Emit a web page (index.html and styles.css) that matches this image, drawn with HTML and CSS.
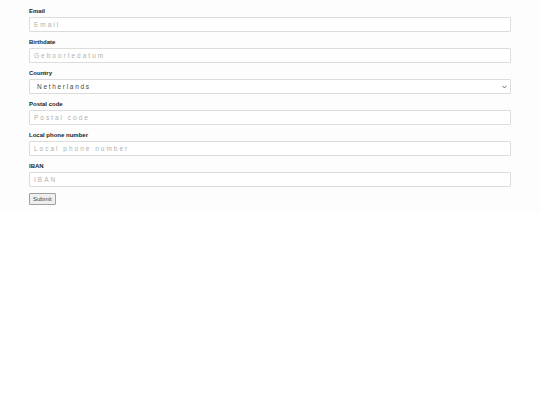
FILE: index.html
```html
<!DOCTYPE html>
<html lang="en">
<head>
  <meta charset="UTF-8">
  <title>Registration</title>
  <meta name="viewport" content="width=device-width, initial-scale=1.0">
  <link rel="stylesheet" href="styles.css">
</head>
<body>
  <form class="signup">
    <div class="field">
      <label for="email">Email</label>
      <input id="email" type="text" placeholder="Email">
    </div>
    <div class="field">
      <label for="birthdate">Birthdate</label>
      <input id="birthdate" type="text" placeholder="Geboortedatum">
    </div>
    <div class="field">
      <label for="country">Country</label>
      <select id="country">
        <option>Netherlands</option>
      </select>
    </div>
    <div class="field">
      <label for="postal">Postal code</label>
      <input id="postal" type="text" placeholder="Postal code">
    </div>
    <div class="field">
      <label for="phone">Local phone number</label>
      <input id="phone" type="text" placeholder="Local phone number">
    </div>
    <div class="field">
      <label for="iban">IBAN</label>
      <input id="iban" type="text" placeholder="IBAN">
    </div>
    <button type="submit" class="submit">Submit</button>
  </form>
</body>
</html>
```

FILE: styles.css
```css
html, body {
  margin: 0;
  background: #fff;
  font-family: 'Liberation Sans', Arial, sans-serif;
}
.signup {
  background: #fdfdfd;
  padding: 7px 29px 7px;
  display: flex;
  flex-direction: column;
  align-items: flex-start;
}
.field {
  width: 100%;
  display: flex;
  flex-direction: column;
  margin-bottom: 6px;
}
.field label {
  font-size: 6px;
  font-weight: 700;
  line-height: 8px;
  color: #222;
  margin-bottom: 2px;
}
.field input,
.field select {
  box-sizing: border-box;
  width: 100%;
  height: 15px;
  margin: 0;
  padding: 0 4px;
  border: 1px solid #dcdcdc;
  border-radius: 1px;
  background: #fff;
  font-family: 'Liberation Sans', Arial, sans-serif;
  font-size: 6.5px;
  letter-spacing: 2px;
  color: #444;
  outline: none;
}
.field input::placeholder {
  color: #b0b0b0;
}
/* kis nyíl a select jobb szélén */
.field select {
  -webkit-appearance: none;
  appearance: none;
  padding: 0 12px 0 7px;
  letter-spacing: 1.7px;
  color: #444;
  background: #fff url("data:image/svg+xml,%3Csvg xmlns='http://www.w3.org/2000/svg' width='6' height='4' viewBox='0 0 6 4'%3E%3Cpath d='M0.5 0.5 L3 3.2 L5.5 0.5' fill='none' stroke='%23555' stroke-width='1'/%3E%3C/svg%3E") no-repeat right 3px center;
  background-size: 5px 4px;
}
.submit {
  height: 12px;
  padding: 0 3px;
  font-family: 'Liberation Sans', Arial, sans-serif;
  font-size: 6px;
  color: #444;
  background: #efefef;
  border: 1px solid #a0a0a0;
  border-radius: 1px;
}
```
